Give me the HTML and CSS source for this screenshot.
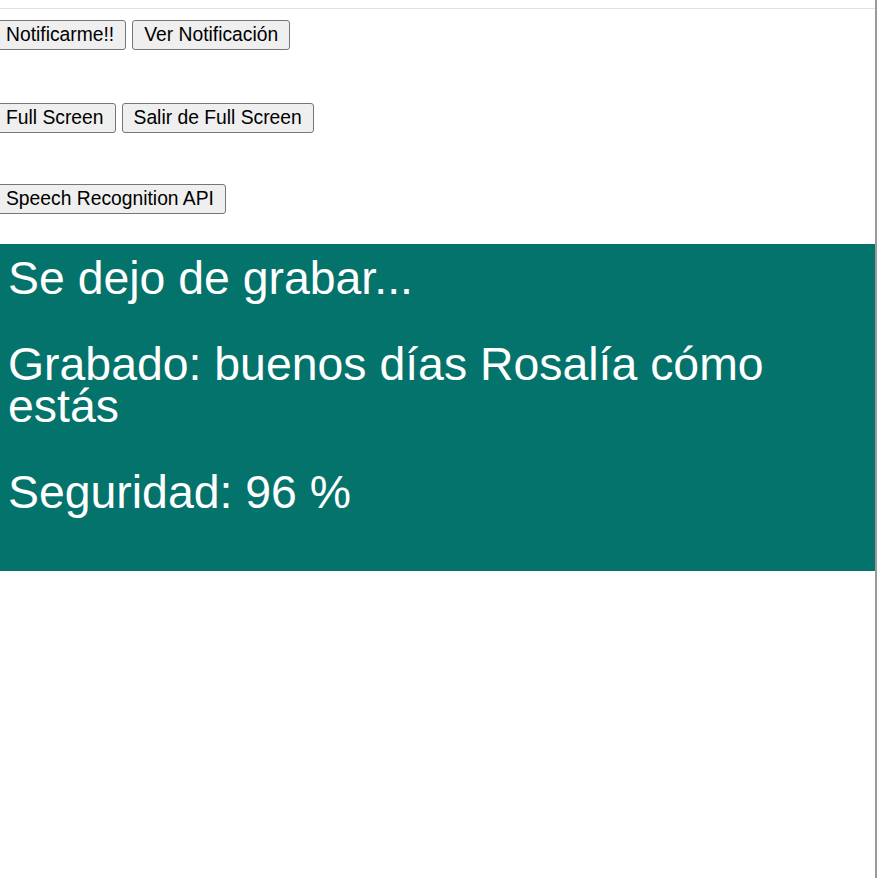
FILE: index.html
```html
<!DOCTYPE html>
<html lang="es">
<head>
<meta charset="utf-8">
<title>Speech Recognition API</title>
<link rel="stylesheet" href="styles.css">
</head>
<body>
<div class="page">
  <div class="topbar"></div>
  <div class="row row-first">
    <button class="btn">Notificarme!!</button>
    <button class="btn">Ver Notificación</button>
  </div>
  <div class="row row-next">
    <button class="btn">Full Screen</button>
    <button class="btn">Salir de Full Screen</button>
  </div>
  <div class="row row-last">
    <button class="btn">Speech Recognition API</button>
  </div>
  <div class="panel">
    <p class="msg">Se dejo de grabar...</p>
    <p class="msg">Grabado: buenos días Rosalía cómo estás</p>
    <p class="msg">Seguridad: 96 %</p>
  </div>
</div>
</body>
</html>
```

FILE: styles.css
```css
html, body {
  margin: 0;
  padding: 0;
  background: #ffffff;
  overflow: hidden;
}

body {
  font-family: "Liberation Sans", Arial, sans-serif;
  color: #000;
}

.page {
  width: 875px;
  height: 878px;
  border-right: 2px solid #9a9a9a;
  box-sizing: content-box;
  overflow: hidden;
}

.topbar {
  height: 8px;
  border-bottom: 1px solid #e2e2e2;
}

.row {
  display: flex;
  gap: 6px;
  margin-left: -6px;
}

.row-first {
  margin-top: 11px;
}

.row-next {
  margin-top: 53px;
}

.row-last {
  margin-top: 51px;
}

.btn {
  font-family: "Liberation Sans", Arial, sans-serif;
  font-size: 19.3px;
  line-height: 22px;
  padding: 3px 11px;
  border: 1px solid #767676;
  border-radius: 3px;
  background: #efefef;
  color: #000;
  margin: 0;
}

.panel {
  margin-top: 30px;
  background: #04736c;
  color: #ffffff;
  padding: 13px 7px 14px 8px;
}

.msg {
  margin: 0 0 44px 0;
  font-size: 46.4px;
  line-height: 42px;
}
```
